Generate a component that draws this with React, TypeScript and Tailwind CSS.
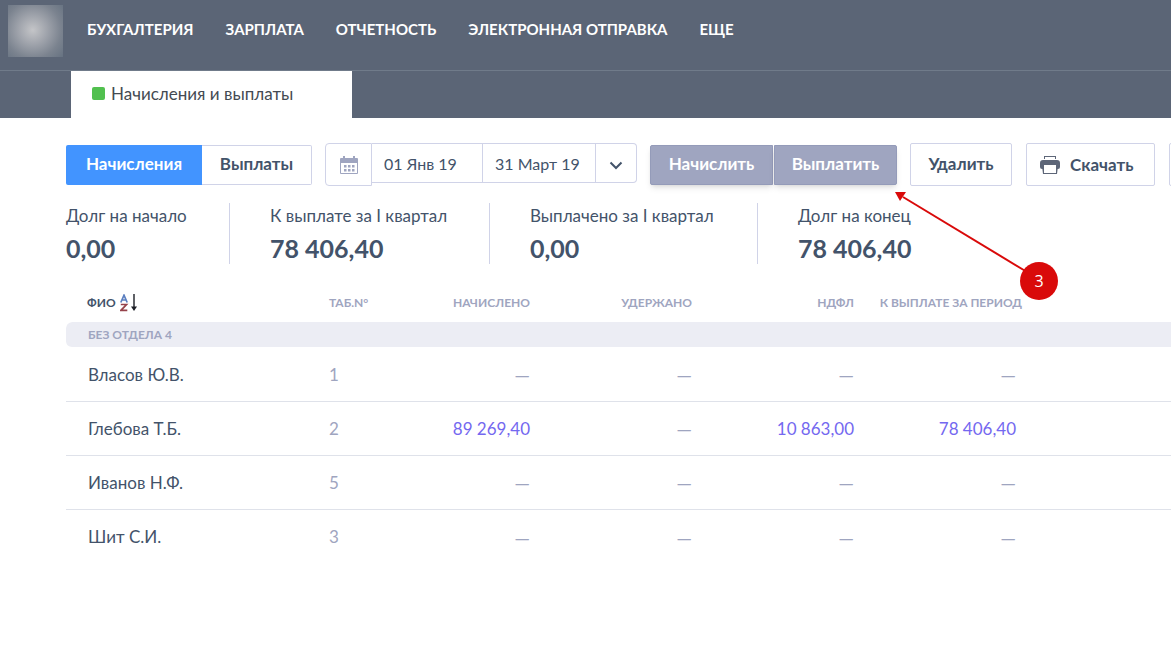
import clsx from "clsx";

const menu = [
  "БУХГАЛТЕРИЯ",
  "ЗАРПЛАТА",
  "ОТЧЕТНОСТЬ",
  "ЭЛЕКТРОННАЯ ОТПРАВКА",
  "ЕЩЕ",
];

const totals = [
  { label: "Долг на начало", value: "0,00", className: "w-[164px]" },
  {
    label: "К выплате за I квартал",
    value: "78 406,40",
    className: "w-[260px] pl-10",
  },
  {
    label: "Выплачено за I квартал",
    value: "0,00",
    className: "w-[268px] pl-10",
  },
  { label: "Долг на конец", value: "78 406,40", className: "pl-10" },
];

const employees = [
  { name: "Власов Ю.В.", number: 1, sums: ["", "", "", ""] },
  {
    name: "Глебова Т.Б.",
    number: 2,
    sums: ["89 269,40", "", "10 863,00", "78 406,40"],
  },
  { name: "Иванов Н.Ф.", number: 5, sums: ["", "", "", ""] },
  { name: "Шит С.И.", number: 3, sums: ["", "", "", ""] },
];

const CalendarIcon = () => (
  <svg width="18" height="18" viewBox="0 0 18 18" fill="#9fa5c0">
    <path d="M3 0h2v2h8V0h2v2h2a1 1 0 0 1 1 1v4H0V3a1 1 0 0 1 1-1h2z" />
    <path d="M0 7h1v10h16V7h1v10a1 1 0 0 1-1 1H1a1 1 0 0 1-1-1z" />
    <path d="M4 9h2.5v2.5H4zM8 9h2.5v2.5H8zM12 9h2.5v2.5H12zM4 13h2.5v2.5H4zM8 13h2.5v2.5H8zM12 13h2.5v2.5H12z" />
  </svg>
);

const PrinterIcon = () => (
  <svg width="20" height="18" viewBox="0 0 20 18" fill="#5d6678">
    <path d="M4 0h12v3h-1V1H5v2H4z" />
    <path d="M3 4h14a3 3 0 0 1 3 3v4a2 2 0 0 1-2 2h-1V9H3v4H2a2 2 0 0 1-2-2V7a3 3 0 0 1 3-3z" />
    <path d="M2 9h2v8h12V9h2v1l-1 8H3L2 10z" />
  </svg>
);

const ChevronIcon = () => (
  <svg width="14" height="9" viewBox="0 0 14 9" fill="none">
    <path d="M1.5 1.5 7 7l5.5-5.5" stroke="#43536a" strokeWidth="2" />
  </svg>
);

const SortIcon = () => (
  <svg width="17" height="18" viewBox="0 0 17 18" fill="none">
    <path d="M.8 8.5 4 1.2l3.2 7.3M2 6h4" stroke="#5b7fc0" strokeWidth="1.7" />
    <path d="M.8 10.5h5.7L1 16.3h6.3" stroke="#96434b" strokeWidth="1.7" />
    <path d="M14 0v14" stroke="#1c1f26" strokeWidth="1.4" />
    <path d="M11 12.5h6L14 17z" fill="#1c1f26" />
  </svg>
);

const Header = () => (
  <header className="bg-[#5b6576]">
    <div className="flex h-[71px] items-start border-b border-[#707b8a] pl-2 pt-[5px]">
      <div className="h-[52px] w-[55px] bg-[radial-gradient(circle_at_45%_48%,#c4c5c8_0%,#a0a4ac_35%,#7b838f_70%,#667281_100%)]" />
      <nav className="ml-6 flex h-12 items-center gap-8">
        {menu.map((item) => (
          <a
            key={item}
            href="#"
            className="whitespace-nowrap text-[15px] font-bold leading-5 text-white"
          >
            {item}
          </a>
        ))}
      </nav>
    </div>
    <div className="flex h-[47px] pl-[71px]">
      <a
        href="#"
        className="flex w-[281px] items-center gap-1.5 bg-white pb-0.5 pl-[21px] text-[17px] text-[#444a52]"
      >
        <span className="size-[13px] rounded-xs bg-[#51c04f]" />
        <span>Начисления и выплаты</span>
      </a>
    </div>
  </header>
);

const Toolbar = () => (
  <div className="flex h-[43px] gap-[13px] overflow-x-clip whitespace-nowrap text-[17px] font-bold text-[#43536a] *:shrink-0">
    <div className="my-0.5 flex h-10">
      <button className="w-[136px] rounded-l-xs bg-[#4294ff] pb-0.5 text-white">
        Начисления
      </button>
      <button className="w-[110px] rounded-r-xs border border-l-0 border-[#d0d3e8] pb-0.5">
        Выплаты
      </button>
    </div>
    <div className="flex items-start">
      <button
        aria-label="Календарь"
        className="flex h-[43px] w-[47px] items-center justify-center rounded-l-sm border border-[#d0d3e8]"
      >
        <CalendarIcon />
      </button>
      <input
        aria-label="Начало периода"
        defaultValue="01 Янв 19"
        className="h-10 w-[111px] border-y border-r border-[#d0d3e8] pl-3 text-base font-normal"
      />
      <input
        aria-label="Конец периода"
        defaultValue="31 Март 19"
        className="h-10 w-[113px] border-y border-r border-[#d0d3e8] pl-3 text-base font-normal"
      />
      <button
        aria-label="Выбрать период"
        className="flex h-10 w-[41px] items-center justify-center rounded-r-sm border border-l-0 border-[#d0d3e8] pt-1"
      >
        <ChevronIcon />
      </button>
    </div>
    <div className="my-0.5 flex h-10 gap-px text-white">
      <button className="w-[123px] rounded-l-xs border border-[#949bb9] bg-[#9fa5c0] pb-0.5 shadow-md">
        Начислить
      </button>
      <button className="w-[123px] rounded-r-xs border border-[#949bb9] bg-[#9fa5c0] pb-0.5 shadow-md">
        Выплатить
      </button>
    </div>
    <button className="w-[102px] rounded-xs border border-[#d0d3e8] pb-0.5">
      Удалить
    </button>
    <button className="ml-px flex w-[129px] items-center gap-2.5 rounded-xs border border-[#d0d3e8] pl-[13px]">
      <PrinterIcon />
      Скачать
    </button>
    <button
      aria-label="Другие действия"
      className="ml-px w-12 rounded-xs border border-[#d0d3e8]"
    />
  </div>
);

const Totals = () => (
  <dl className="mt-[17px] flex text-[#43536a]">
    {totals.map(({ label, value, className }, i) => (
      <div
        key={label}
        className={clsx(
          "h-[61px] whitespace-nowrap",
          i < totals.length - 1 && "border-r border-[#d0d3e8]",
          className,
        )}
      >
        <dt className="text-[17px] leading-[26px]">{label}</dt>
        <dd className="mt-1 text-[25px] font-bold leading-[30px]">{value}</dd>
      </div>
    ))}
  </dl>
);

const PayrollTable = () => (
  <table className="mt-[18px] w-full table-fixed border-separate border-spacing-0 whitespace-nowrap">
    <colgroup>
      <col className="w-[263px]" />
      <col className="w-[39px]" />
      <col className="w-[162px]" />
      <col className="w-[162px]" />
      <col className="w-[162px]" />
      <col className="w-[168px]" />
      <col />
    </colgroup>
    <thead>
      <tr className="h-10 text-right text-xs text-[#9fa5c0] *:pt-0.5 *:font-bold">
        <th className="pl-[21px] text-left text-[#43536a]">
          <button className="flex items-center gap-1">
            ФИО
            <SortIcon />
          </button>
        </th>
        <th className="text-left">ТАБ.N°</th>
        <th>НАЧИСЛЕНО</th>
        <th>УДЕРЖАНО</th>
        <th>НДФЛ</th>
        <th>К ВЫПЛАТЕ ЗА ПЕРИОД</th>
        <th />
      </tr>
    </thead>
    <tbody className="text-[17px]">
      <tr className="h-[26px]">
        <th
          colSpan={7}
          className="rounded-l-md border-b border-transparent bg-[#ecedf4] bg-clip-padding pl-[22px] text-left text-xs font-bold leading-5 text-[#9fa5c0]"
        >
          БЕЗ ОТДЕЛА 4
        </th>
      </tr>
      {employees.map(({ name, number, sums }) => (
        <tr
          key={name}
          className="h-[54px] text-right text-[#9fa5c0] *:border-b *:border-[#dfe2ea] last:*:border-0"
        >
          <td className="pl-[22px] text-left text-[#43536a]">{name}</td>
          <td className="text-left">{number}</td>
          {sums.map((sum, i) => (
            <td key={i} className={clsx(i === 3 && "pr-1.5")}>
              {sum ? (
                <a href="#" className="text-[#7468f0]">
                  {sum}
                </a>
              ) : (
                <span className="text-xl">—</span>
              )}
            </td>
          ))}
          <td />
        </tr>
      ))}
    </tbody>
  </table>
);

// callout pointing at the pay button
const Callout = () => (
  <div className="pointer-events-none absolute left-[895px] top-[191px] h-[110px] w-[164px]">
    <svg width="164" height="110" viewBox="0 0 164 110">
      <path d="M8 6 132 81" stroke="#d90a0a" strokeWidth="2" />
      <path d="M0 1h11L5 10z" fill="#d90a0a" />
    </svg>
    <span className="absolute bottom-px right-px flex size-[38px] items-center justify-center rounded-full bg-[#d90a0a] font-['Open_Sans',sans-serif] text-base text-white">
      3
    </span>
  </div>
);

export default function App() {
  return (
    <div className="relative min-h-screen overflow-x-clip bg-white font-[Lato,sans-serif]">
      <Header />
      <main className="pl-[66px] pt-[25px]">
        <Toolbar />
        <Totals />
        <PayrollTable />
      </main>
      <Callout />
    </div>
  );
}
